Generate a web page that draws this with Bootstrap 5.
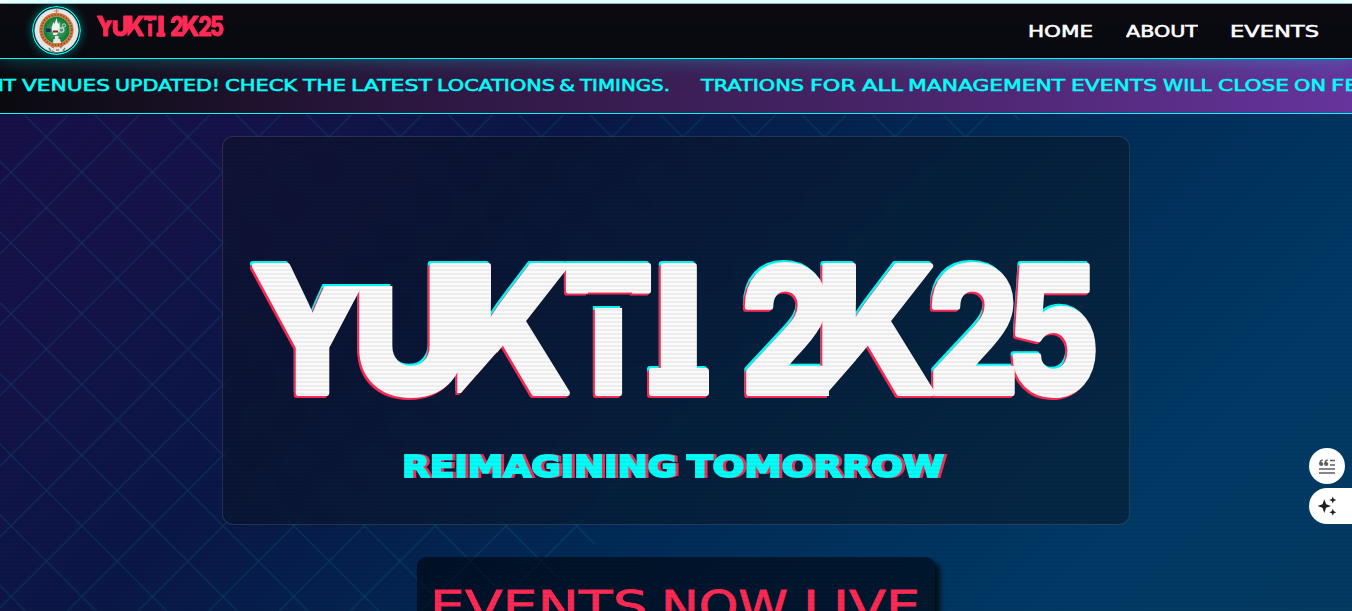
<!DOCTYPE html>
<html lang="en">
<head>
<meta charset="utf-8">
<meta name="viewport" content="width=device-width, initial-scale=1">
<title>YUKTI 2K25</title>
<link href="https://cdn.jsdelivr.net/npm/bootstrap@5.3.0/dist/css/bootstrap.min.css" rel="stylesheet">
<style>
:root{--neon:#00fff9;--hot:#ff2a55}
html,body{height:100%;overflow:hidden}
body{background:linear-gradient(135deg,#190f48 0%,#15134a 18%,#0a1847 36%,#002c58 60%,#003b68 85%,#033a62 100%);font-family:"DejaVu Sans",sans-serif}
main{height:calc(100% - 114px);overflow:hidden}
svg{display:block}
svg text{font-family:"DejaVu Sans",sans-serif}
.topline{height:4px;background:#fff;border-bottom:1px solid #aaa}
.mainbar{height:55px;padding:0 33px 0 32px;background:linear-gradient(#0b0a10,#070a10);border-bottom:1px solid var(--neon);box-shadow:0 0 20px rgba(0,255,249,.3);z-index:3}
.seal{border-radius:50%;box-shadow:0 0 10px rgba(0,255,249,.4);margin-bottom:2px}
.ticker{height:55px;background:linear-gradient(90deg,#0a0a0f,#2c1740 30%,#472467 65%,#66349c);border-bottom:1px solid var(--neon);z-index:2}
.wide text{font-size:15.2px;fill:#fff;stroke:#fff;stroke-width:.55}
.ticker text{fill:var(--neon);stroke:var(--neon)}
.lattice,.scan{inset:0;pointer-events:none}
.scan{z-index:4;top:114px;background:repeating-linear-gradient(0deg,rgba(0,0,0,.05) 0 2px,transparent 2px 4px)}
.hero{width:908px;height:389px;flex:none;margin-top:22px;border:1px solid rgba(255,255,255,.12);border-radius:11px;background:rgba(12,16,26,.42);backdrop-filter:blur(10px)}
.wordmark text{font-family:Inter,sans-serif;font-weight:800}
.tagline text{font-weight:bold;font-size:31px}
.live{width:518px;height:80px;flex:none;margin-top:32px;padding-top:32px;border-radius:9px;background:rgba(0,5,12,.6);box-shadow:5px 5px 5px rgba(0,8,10,.85)}
.live text{fill:var(--hot);stroke:var(--hot);stroke-width:.8;font-size:42px}
.dock{right:0;top:448px;z-index:6}
.dock>div{height:36px;background:#fff}
.quote{width:36px;margin-right:7px;border-radius:18px}
.spark{width:43px;border-radius:18px 0 0 18px;padding-left:8px}
</style>
</head>
<body class="position-relative">
<svg class="lattice position-absolute" width="1352" height="611" aria-hidden="true">
  <defs><pattern id="net" x="11" y="172.3" width="70.71" height="70.71" patternUnits="userSpaceOnUse"><path d="M0 0L70.71 70.71M70.71 0L0 70.71" stroke="#00cdd0" stroke-opacity=".17" stroke-width="1"/></pattern></defs>
  <path d="M0 115H1025L529 611H0Z" fill="url(#net)"/>
</svg>
<div class="topline position-relative"></div>
<nav class="mainbar navbar d-flex flex-nowrap align-items-center justify-content-between position-relative">
  <a class="d-flex align-items-center text-decoration-none" style="gap:15px" href="#">
    <svg class="seal" width="49" height="49" viewBox="0 0 49 49" aria-hidden="true">
      <defs><radialGradient id="grn"><stop offset="0" stop-color="#64a77b"/><stop offset="1" stop-color="#077a33"/></radialGradient></defs>
      <circle cx="24.5" cy="24.5" r="23.8" fill="#07090f" stroke="#00fff9" stroke-width="1.3"/>
      <circle cx="24.5" cy="24.5" r="21.8" fill="#e3e6e9" stroke="#bdeff0" stroke-width=".6"/>
      <circle cx="24.5" cy="24" r="15.2" fill="none" stroke="#d5793c" stroke-width="4"/>
      <circle cx="24.5" cy="24" r="15.2" fill="none" stroke="#8a4b24" stroke-width="1.8" stroke-dasharray="1.4 1.6"/>
      <circle cx="24.5" cy="24" r="13.2" fill="url(#grn)"/>
      <path d="M19.5 22l2-6 1 2 2-6 1.5 6 1.5-2 .5 8-3.500 5h-3z" fill="#eef4ef"/><path d="M21.500 33h6.500l1 4h-8zM23 30h3.500v4H23z" fill="#e6e6e6"/>
      <circle cx="29.500" cy="24" r="2.300" fill="none" stroke="#bcd6c5" stroke-width="1.500"/><circle cx="32" cy="19.500" r="1.700" fill="none" stroke="#bcd6c5"/>
      <rect x="14" y="22.500" width="4.500" height="3.500" fill="#1c2d5a"/><path d="M21 25.500h5" stroke="#7a2a20" stroke-width="1.800"/>
      <path d="M19 40l3 2M31 39l-3 3M24 44h3M20 45l2 1" stroke="#aa784d" stroke-width="1.500"/><path d="M17 42l2 3M33 42l-2 3" stroke="#51986b" stroke-width="1.400"/>
      <path d="M24.500 3v5M22 5h5" stroke="#c08261" stroke-width="1"/>
    </svg>
    <svg class="wordmark mb-2" width="128" height="24" viewBox="248 252 850 159">
      <g fill="#ff2a55" stroke="#ff2a55" stroke-width="6" stroke-linejoin="round" mask="url(#cuts)">
        <text y="394" font-size="178"><tspan x="251" textLength="122" lengthAdjust="spacingAndGlyphs">Y</tspan><tspan x="353" textLength="116" lengthAdjust="spacingAndGlyphs">U</tspan><tspan x="451" textLength="120" lengthAdjust="spacingAndGlyphs">K</tspan><tspan x="564" textLength="89" lengthAdjust="spacingAndGlyphs">T</tspan><tspan x="654">I</tspan> <tspan x="741" textLength="91" lengthAdjust="spacingAndGlyphs">2</tspan><tspan x="816" textLength="120" lengthAdjust="spacingAndGlyphs">K</tspan><tspan x="928" textLength="91" lengthAdjust="spacingAndGlyphs">2</tspan><tspan x="1007" textLength="92" lengthAdjust="spacingAndGlyphs">5</tspan></text>
        <rect x="652" y="371" width="54" height="22"/>
      </g>
    </svg>
  </a>
  <div class="d-flex wide" style="gap:33px">
    <a href="#"><svg width="64" height="20"><text x="-1" y="15.5" textLength="65" lengthAdjust="spacingAndGlyphs">HOME</text></svg></a>
    <a href="#"><svg width="72" height="20"><text x="0" y="15.5" textLength="72" lengthAdjust="spacingAndGlyphs">ABOUT</text></svg></a>
    <a href="#"><svg width="88" height="20"><text x="-1" y="15.5" textLength="89" lengthAdjust="spacingAndGlyphs">EVENTS</text></svg></a>
  </div>
</nav>
<div class="ticker wide position-relative">
  <svg width="1352" height="54" overflow="hidden"><text y="32"><tspan x="-11" textLength="27" lengthAdjust="spacingAndGlyphs">NT</tspan> <tspan x="22" textLength="88" lengthAdjust="spacingAndGlyphs">VENUES</tspan> <tspan x="115" textLength="105" lengthAdjust="spacingAndGlyphs">UPDATED!</tspan> <tspan x="225" textLength="72" lengthAdjust="spacingAndGlyphs">CHECK</tspan> <tspan x="303" textLength="43" lengthAdjust="spacingAndGlyphs">THE</tspan> <tspan x="351" textLength="81" lengthAdjust="spacingAndGlyphs">LATEST</tspan> <tspan x="437" textLength="118" lengthAdjust="spacingAndGlyphs">LOCATIONS</tspan> <tspan x="559" textLength="16" lengthAdjust="spacingAndGlyphs">&amp;</tspan> <tspan x="580" textLength="90" lengthAdjust="spacingAndGlyphs">TIMINGS.</tspan> <tspan x="701" textLength="103" lengthAdjust="spacingAndGlyphs">TRATIONS</tspan> <tspan x="810" textLength="46" lengthAdjust="spacingAndGlyphs">FOR</tspan> <tspan x="862" textLength="41" lengthAdjust="spacingAndGlyphs">ALL</tspan> <tspan x="908" textLength="157" lengthAdjust="spacingAndGlyphs">MANAGEMENT</tspan> <tspan x="1071" textLength="86" lengthAdjust="spacingAndGlyphs">EVENTS</tspan> <tspan x="1163" textLength="49" lengthAdjust="spacingAndGlyphs">WILL</tspan> <tspan x="1218" textLength="71" lengthAdjust="spacingAndGlyphs">CLOSE</tspan> <tspan x="1294" textLength="32" lengthAdjust="spacingAndGlyphs">ON</tspan> <tspan x="1331" textLength="28" lengthAdjust="spacingAndGlyphs">FE</tspan></text></svg>
</div>
<main class="d-flex flex-column align-items-center">
  <section class="hero position-relative">
    <svg class="wordmark" width="906" height="290" viewBox="223 137 906 290">
      <defs>
        <mask id="cuts" maskUnits="userSpaceOnUse" x="200" y="200" width="950" height="250">
          <rect x="200" y="200" width="950" height="250" fill="#fff"/>
          <path d="M316 240H396V286H316ZM588 292.500H632V308H588ZM461 393L497 352L494 410H455V393ZM829 391L863 352L860 410H829Z" fill="#000"/>
        </mask>
        <filter id="split" filterUnits="userSpaceOnUse" x="223" y="240" width="906" height="180" color-interpolation-filters="sRGB">
          <feOffset in="SourceAlpha" dx="-2" dy="-2" result="a"/><feFlood flood-color="#00fff9"/><feComposite in2="a" operator="in" result="cy"/>
          <feOffset in="SourceAlpha" dx="-2" dy="1.5" result="b"/><feFlood flood-color="#ff2a55"/><feComposite in2="b" operator="in" result="rd"/>
          <feMerge><feMergeNode in="cy"/><feMergeNode in="rd"/><feMergeNode in="SourceGraphic"/></feMerge>
        </filter>
      </defs>
      <g filter="url(#split)"><g fill="#fafafa" stroke="#fafafa" stroke-width="6" stroke-linejoin="round" mask="url(#cuts)">
        <text y="393" font-size="174"><tspan x="251" textLength="122" lengthAdjust="spacingAndGlyphs">Y</tspan><tspan x="353" textLength="116" lengthAdjust="spacingAndGlyphs">U</tspan><tspan x="451" textLength="120" lengthAdjust="spacingAndGlyphs">K</tspan><tspan x="564" textLength="89" lengthAdjust="spacingAndGlyphs">T</tspan><tspan x="654">I</tspan> <tspan x="741" textLength="91" lengthAdjust="spacingAndGlyphs">2</tspan><tspan x="816" textLength="120" lengthAdjust="spacingAndGlyphs">K</tspan><tspan x="928" textLength="91" lengthAdjust="spacingAndGlyphs">2</tspan><tspan x="1007" textLength="92" lengthAdjust="spacingAndGlyphs">5</tspan></text>
        <rect x="652" y="371" width="54" height="22"/>
      </g></g>
    </svg>
    <svg class="tagline" width="906" height="70" viewBox="223 427 906 70">
      <defs><filter id="ghost" filterUnits="userSpaceOnUse" x="223" y="427" width="906" height="70" color-interpolation-filters="sRGB"><feOffset in="SourceAlpha" dx="3" dy="0" result="a"/><feFlood flood-color="#ff2a55"/><feComposite in2="a" operator="in" result="r"/><feMerge><feMergeNode in="r"/><feMergeNode in="SourceGraphic"/></feMerge></filter></defs>
      <text y="477" fill="#00fff9" stroke="#00fff9" stroke-width="2" filter="url(#ghost)"><tspan x="402" textLength="275" lengthAdjust="spacingAndGlyphs">REIMAGINING</tspan> <tspan x="687" textLength="257" lengthAdjust="spacingAndGlyphs">TOMORROW</tspan></text>
    </svg>
  </section>
  <section class="live position-relative">
    <svg width="518" height="46" viewBox="417 589 518 46"><text y="621"><tspan x="430" textLength="218" lengthAdjust="spacingAndGlyphs">EVENTS</tspan> <tspan x="661" textLength="127" lengthAdjust="spacingAndGlyphs">NOW</tspan> <tspan x="803" textLength="117" lengthAdjust="spacingAndGlyphs">LIVE</tspan></text></svg>
  </section>
</main>
<div class="scan position-absolute"></div>
<aside class="dock position-absolute d-flex flex-column align-items-end gap-1">
  <div class="quote d-flex align-items-center justify-content-center">
    <svg width="16" height="15" fill="none" stroke="#606060" stroke-width="1.7"><path d="M11 1.5h5M11 6h5M0 10h16M0 14h16"/><g fill="#606060" stroke="none"><circle cx="2.2" cy="5" r="2.1"/><circle cx="7.2" cy="5" r="2.1"/></g><path d="M.9 5C.8 2.8 1.6 1.5 3.7 1M5.9 5C5.8 2.8 6.6 1.5 8.7 1" stroke-width="1.4"/></svg>
  </div>
  <div class="spark d-flex align-items-center"><svg width="20" height="20" fill="#1f1f1f"><path d="M7.3 3.3L9.1 8.2 14 10l-4.900 1.800L7.300 17l-1.800-5.200L.5 10l5-1.800ZM15.800.5l1 2.500 2.600 1-2.600 1-1 2.600-1-2.600-2.600-1 2.600-1ZM15.800 12.800l1 2.400 2.500 1-2.500 1-1 2.500-1-2.500-2.600-1 2.600-1Z"/></svg></div>
</aside>
<script src="https://cdn.jsdelivr.net/npm/bootstrap@5.3.0/dist/js/bootstrap.bundle.min.js"></script>
</body>
</html>
